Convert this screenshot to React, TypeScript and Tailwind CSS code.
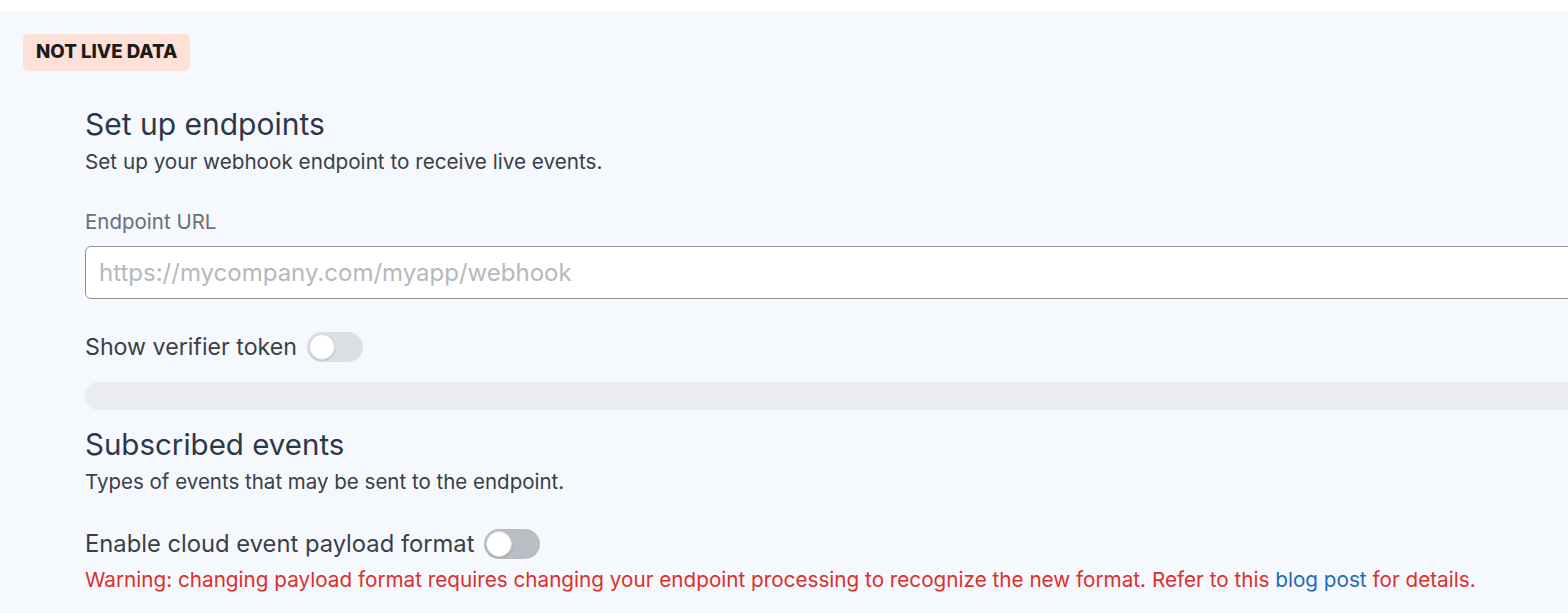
import { useState } from 'react';

function Toggle({ dark }: { dark?: boolean }) {
    const [on, setOn] = useState(false);
    return (
        <button
            type="button"
            onClick={() => setOn(!on)}
            className={`relative inline-flex h-[30px] w-[56px] shrink-0 items-center rounded-full ${
                on ? 'bg-[#2a6fc0]' : dark ? 'bg-[#babdc4]' : 'bg-[#dcdfe4]'
            }`}
            aria-label="toggle"
        >
            <span
                className={`absolute top-[2px] h-[26px] w-[26px] rounded-full border border-[#d8dade] bg-white shadow-[0_1px_2px_rgba(0,0,0,0.15)] ${
                    on ? 'left-[28px]' : 'left-[2px]'
                }`}
            />
        </button>
    );
}

export default function App() {
    return (
        <main
            className="min-h-screen bg-white pt-[11px] text-[#2f3a4b]"
            style={{ fontFamily: 'Inter, "Noto Sans", sans-serif' }}
        >
            <div className="min-h-[602px] overflow-hidden bg-[#f5f8fd] pl-[23px] pt-[23px]">
                {/* Badge */}
                <span className="inline-flex h-[37px] items-center rounded-[5px] bg-[#fde1d7] px-[13px] text-[18.7px] font-extrabold text-[#1b1b1b]">
                    NOT LIVE DATA
                </span>

                <div className="pl-[62px] pt-[35px]">
                    {/* Endpoints */}
                    <h2 className="text-[30px] leading-[36px] font-normal text-[#2c3749]">Set up endpoints</h2>
                    <p className="mt-[7px] text-[20.7px] leading-[26px] text-[#3a3f47]">
                        Set up your webhook endpoint to receive live events.
                    </p>

                    <label className="mt-[34px] block text-[20.5px] leading-[26px] text-[#6b6f76]">
                        Endpoint URL
                    </label>
                    <input
                        type="text"
                        placeholder="https://mycompany.com/myapp/webhook"
                        className="mt-[11px] h-[53px] w-[1520px] rounded-[6px] border border-[#8d9198] bg-white px-[13px] text-[24px] text-[#2c3749] outline-none placeholder:text-[#b4b8bf]"
                    />

                    <div className="mt-[33px] flex h-[30px] items-center gap-[10px]">
                        <span className="text-[23.2px] leading-[30px] text-[#3a3f47]">Show verifier token</span>
                        <Toggle />
                    </div>

                    <div className="mt-[20px] h-[28px] w-[1520px] rounded-full bg-[#ebedf1]" />

                    {/* Subscribed events */}
                    <h2 className="mt-[16px] text-[29.5px] leading-[36px] font-normal text-[#2c3749]">
                        Subscribed events
                    </h2>
                    <p className="mt-[7px] text-[20.5px] leading-[26px] text-[#3a3f47]">
                        Types of events that may be sent to the endpoint.
                    </p>

                    <div className="mt-[34px] flex h-[30px] items-center gap-[10px]">
                        <span className="text-[23.75px] leading-[30px] text-[#3a3f47]">
                            Enable cloud event payload format
                        </span>
                        <Toggle dark />
                    </div>
                    <p className="mt-[8px] whitespace-nowrap text-[20.7px] leading-[26px] text-[#dc2f2b]">
                        Warning: changing payload format requires changing your endpoint processing to recognize the
                        new format. Refer to this{' '}
                        <a href="#" className="text-[#1d6bb4]">
                            blog post
                        </a>{' '}
                        for details.
                    </p>
                </div>
            </div>
        </main>
    );
}
